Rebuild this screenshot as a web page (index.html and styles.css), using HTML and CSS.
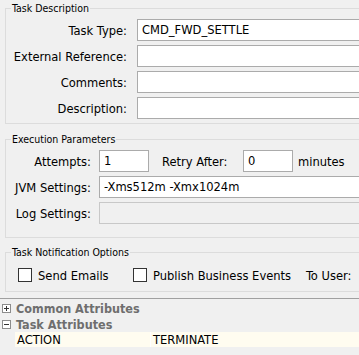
FILE: index.html
```html
<!DOCTYPE html>
<html lang="en">

<head>
    <meta charset="UTF-8">
    <meta name="viewport" content="width=device-width, initial-scale=1.0">
    <title>Task</title>
    <link rel="stylesheet" href="styles.css">
</head>

<body>
    <div class="page">
        <fieldset class="group desc">
            <legend>Task Description</legend>
            <div class="row">
                <label>Task Type:</label>
                <div class="field">CMD_FWD_SETTLE</div>
            </div>
            <div class="row">
                <label>External Reference:</label>
                <div class="field"></div>
            </div>
            <div class="row">
                <label>Comments:</label>
                <div class="field"></div>
            </div>
            <div class="row">
                <label>Description:</label>
                <div class="field"></div>
            </div>
        </fieldset>

        <fieldset class="group exec">
            <legend>Execution Parameters</legend>
            <div class="row">
                <label>Attempts:</label>
                <div class="inline">
                    <div class="field small">1</div>
                    <span class="retry">Retry After:</span>
                    <div class="field small">0</div>
                    <span class="unit">minutes</span>
                </div>
            </div>
            <div class="row">
                <label>JVM Settings:</label>
                <div class="field">-Xms512m -Xmx1024m</div>
            </div>
            <div class="row log">
                <label>Log Settings:</label>
                <div class="field disabled"></div>
            </div>
        </fieldset>

        <fieldset class="group notify">
            <legend>Task Notification Options</legend>
            <div class="checks">
                <span class="check first"><span class="box"></span>Send Emails</span>
                <span class="check second"><span class="box"></span>Publish Business Events</span>
                <span class="touser">To User:</span>
            </div>
        </fieldset>

        <div class="tree">
            <div class="node">
                <svg width="9" height="9" viewBox="0 0 9 9"><rect x="0.5" y="0.5" width="8" height="8" fill="#fff" stroke="#8c8c8c"/><path d="M2 4.5h5M4.5 2v5" stroke="#333"/></svg>
                <span>Common Attributes</span>
            </div>
            <div class="node">
                <svg width="9" height="9" viewBox="0 0 9 9"><rect x="0.5" y="0.5" width="8" height="8" fill="#fff" stroke="#8c8c8c"/><path d="M2 4.5h5" stroke="#333"/></svg>
                <span>Task Attributes</span>
            </div>
            <div class="attr">
                <div class="cell key">ACTION</div>
                <div class="cell">TERMINATE</div>
            </div>
        </div>
    </div>
</body>

</html>
```

FILE: styles.css
```css
* {
    margin: 0;
    padding: 0;
    box-sizing: border-box;
}

body {
    background: #f0f0f0;
    font-family: "DejaVu Sans Condensed", "DejaVu Sans", sans-serif;
    font-stretch: condensed;
    font-size: 12.8px;
    color: #000;
    overflow: hidden;
}

.page {
    width: 420px;
}

.group {
    border: 1px solid #dcdcdc;
    margin-left: 5px;
    padding: 4px 0 4px 0;
}

.group legend {
    font-size: 10.5px;
    line-height: 13px;
    margin-left: 5px;
    padding: 0 1px;
}

.desc {
    margin-top: 2px;
}

.exec {
    margin-top: 9px;
    padding-top: 4px;
    padding-bottom: 13px;
}

.notify {
    margin-top: 8px;
    padding-top: 6px;
    padding-bottom: 6px;
}

.row {
    display: flex;
    align-items: center;
    height: 22px;
    margin-bottom: 4px;
}

.row:last-child {
    margin-bottom: 0;
}

.row.log {
    margin-top: 2px;
}

.desc label {
    width: 121px;
    margin-right: 10px;
    text-align: right;
}

.exec label {
    width: 85px;
    margin-right: 8px;
    text-align: right;
}

.field {
    flex: 1;
    height: 22px;
    background: #fff;
    border: 1px solid #ababab;
    padding: 0 4px;
    line-height: 20px;
}

.field.disabled {
    background: #f0f0f0;
    border-color: #c8c8c8;
}

.inline {
    display: flex;
    align-items: center;
}

.field.small {
    flex: none;
    width: 50px;
}

.retry {
    width: 94px;
    padding-left: 13px;
}

.unit {
    margin-left: 5px;
}

.checks {
    display: flex;
    align-items: center;
    height: 20px;
    padding-left: 12px;
}

.check {
    display: flex;
    align-items: center;
}

.check.first {
    width: 115px;
}

.check.second {
    width: 173px;
}

.box {
    width: 14px;
    height: 14px;
    background: #fff;
    border: 1px solid #333;
    margin-right: 6px;
}

.tree {
    margin-top: 6px;
    border-top: 1px solid #a0a0a0;
    padding-top: 1px;
}

.node {
    display: flex;
    align-items: center;
    height: 16px;
    padding-left: 2px;
}

.node svg {
    margin-right: 5px;
}

.node span {
    font-weight: bold;
    color: #6e6e6e;
    font-size: 12.5px;
}

.attr {
    display: flex;
    margin-left: 15px;
    background: #fffcf0;
    height: 15px;
    line-height: 15px;
}

.cell {
    padding-left: 2px;
}

.cell.key {
    width: 136px;
    border-right: 1px solid #fff;
}
```
